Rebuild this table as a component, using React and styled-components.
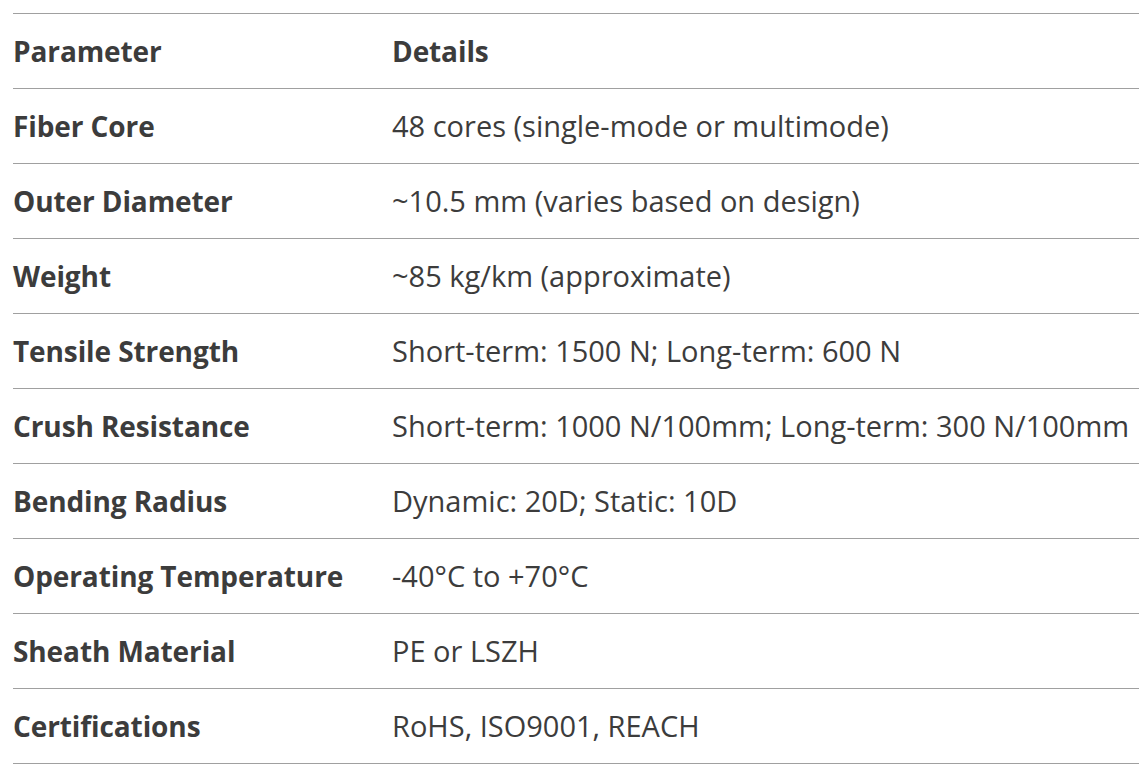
import React from "react";
import styled, { createGlobalStyle } from "styled-components";

const Global = createGlobalStyle`
  html, body { margin: 0; padding: 0; background: #ffffff; }
  body { font-family: "Open Sans", "Noto Sans", sans-serif; }
`;

const Page = styled.div`
  padding: 13px 0 0 13px;
`;

const Table = styled.div`
  display: flex;
  flex-direction: column;
  border-top: 1px solid #a0a0a0;
`;

const Row = styled.div`
  display: grid;
  grid-template-columns: 379px 1fr;
  align-items: center;
  height: 74px;
  border-bottom: 1px solid #a0a0a0;
`;

const Cell = styled.div`
  font-size: ${(p) => (p.$bold ? "28px" : "29px")};
  line-height: 38px;
  color: #3c3c3c;
  font-weight: ${(p) => (p.$bold ? 700 : 400)};
  white-space: nowrap;
  letter-spacing: ${(p) => (p.$bold ? "-0.1px" : "0")};
`;

const rows = [
  ["Fiber Core", "48 cores (single-mode or multimode)"],
  ["Outer Diameter", "~10.5 mm (varies based on design)"],
  ["Weight", "~85 kg/km (approximate)"],
  ["Tensile Strength", "Short-term: 1500 N; Long-term: 600 N"],
  ["Crush Resistance", "Short-term: 1000 N/100mm; Long-term: 300 N/100mm"],
  ["Bending Radius", "Dynamic: 20D; Static: 10D"],
  ["Operating Temperature", "-40°C to +70°C"],
  ["Sheath Material", "PE or LSZH"],
  ["Certifications", "RoHS, ISO9001, REACH"],
];

export default function App() {
  return (
    <>
      <Global />
      <Page>
        <Table>
          <Row>
            <Cell $bold>Parameter</Cell>
            <Cell $bold>Details</Cell>
          </Row>
          {rows.map(([k, v]) => (
            <Row key={k}>
              <Cell $bold>{k}</Cell>
              <Cell>{v}</Cell>
            </Row>
          ))}
        </Table>
      </Page>
    </>
  );
}
